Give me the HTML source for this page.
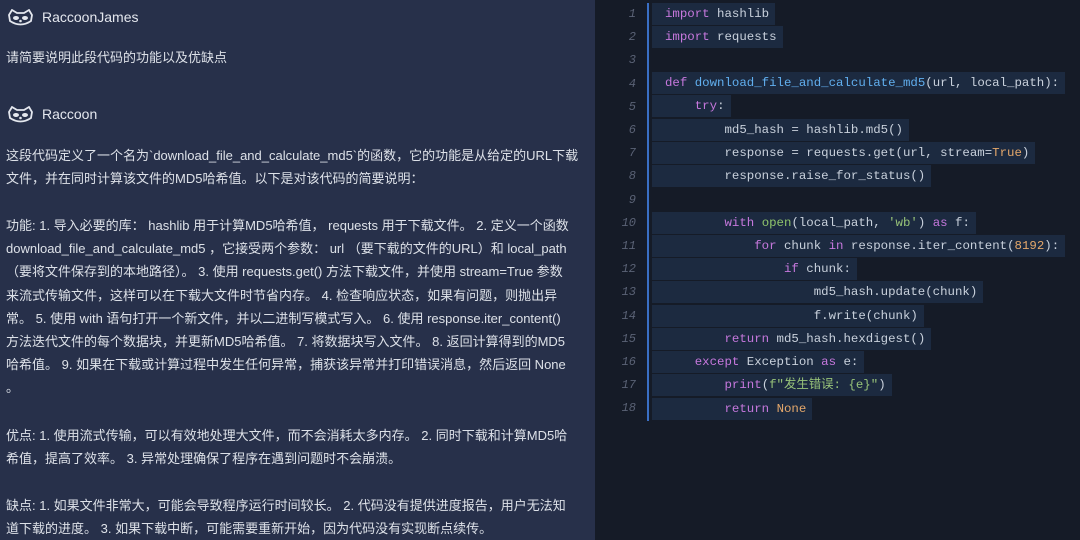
<!DOCTYPE html>
<html><head><meta charset="utf-8"><style>
*{margin:0;padding:0;box-sizing:border-box}
body{width:1080px;height:540px;overflow:hidden;background:#151b27;position:relative;font-family:"Liberation Sans","Noto Sans CJK SC",sans-serif}
#left{position:absolute;left:0;top:0;width:595px;height:540px;background:#27304a;color:#dde1e8}
.l{position:absolute;left:6px;font-size:13px;white-space:nowrap;line-height:16px;letter-spacing:0}
.name{position:absolute;left:42px;font-size:14px;color:#e4e7ee}
.ic{position:absolute;left:7px;width:27px;height:17px}
#code{position:absolute;left:595px;top:0;width:485px;height:540px;background:#151b27}
.bar{position:absolute;left:647px;top:3px;width:2px;height:418px;background:#3a6fc4}
.n{position:absolute;width:40px;left:596px;text-align:right;font-family:"Liberation Mono",monospace;font-style:italic;font-size:12px;color:#5a6275;line-height:16px}
.c{position:absolute;left:652px;font-family:"Liberation Mono",monospace;font-size:12.4px;color:#c9d1dc;white-space:pre;line-height:22px;height:22px}
.c span.h{background:#1c2a40;padding:0 6px 0 13px;display:inline-block;height:22px}
.k{color:#c678dd}.f{color:#61afef}.s{color:#98c379}.o{color:#e5a86b}.b{color:#8fc46b}
</style></head><body>
<div id="left">
<svg class="ic" style="top:9px" viewBox="0 0 27 17"><path d="M2 6 L5 1 L10 4 H17 L22 1 L25 6 L24 12 Q13.5 19 3 12 Z" fill="none" stroke="#e4e7ee" stroke-width="1.8"/><ellipse cx="9" cy="9" rx="3" ry="2" fill="#e4e7ee"/><ellipse cx="18" cy="9" rx="3" ry="2" fill="#e4e7ee"/><circle cx="13.5" cy="12" r="1.3" fill="#e4e7ee"/></svg>
<div class="name" style="top:9px">RaccoonJames</div>
<div class="l" style="top:50px">请简要说明此段代码的功能以及优缺点</div>
<svg class="ic" style="top:106px" viewBox="0 0 27 17"><path d="M2 6 L5 1 L10 4 H17 L22 1 L25 6 L24 12 Q13.5 19 3 12 Z" fill="none" stroke="#e4e7ee" stroke-width="1.8"/><ellipse cx="9" cy="9" rx="3" ry="2" fill="#e4e7ee"/><ellipse cx="18" cy="9" rx="3" ry="2" fill="#e4e7ee"/><circle cx="13.5" cy="12" r="1.3" fill="#e4e7ee"/></svg>
<div class="name" style="top:106px">Raccoon</div>
<div class="l" style="top:148px">这段代码定义了一个名为`download_file_and_calculate_md5`的函数，它的功能是从给定的URL下载</div>
<div class="l" style="top:171px">文件，并在同时计算该文件的MD5哈希值。以下是对该代码的简要说明：</div>
<div class="l" style="top:218px">功能: 1. 导入必要的库： hashlib 用于计算MD5哈希值， requests 用于下载文件。 2. 定义一个函数</div>
<div class="l" style="top:241px">download_file_and_calculate_md5 ，它接受两个参数： url （要下载的文件的URL）和 local_path</div>
<div class="l" style="top:264px">（要将文件保存到的本地路径）。 3. 使用 requests.get() 方法下载文件，并使用 stream=True 参数</div>
<div class="l" style="top:288px">来流式传输文件，这样可以在下载大文件时节省内存。 4. 检查响应状态，如果有问题，则抛出异</div>
<div class="l" style="top:311px">常。 5. 使用 with 语句打开一个新文件，并以二进制写模式写入。 6. 使用 response.iter_content()</div>
<div class="l" style="top:334px">方法迭代文件的每个数据块，并更新MD5哈希值。 7. 将数据块写入文件。 8. 返回计算得到的MD5</div>
<div class="l" style="top:357px">哈希值。 9. 如果在下载或计算过程中发生任何异常，捕获该异常并打印错误消息，然后返回 None</div>
<div class="l" style="top:380px">。</div>
<div class="l" style="top:428px">优点: 1. 使用流式传输，可以有效地处理大文件，而不会消耗太多内存。 2. 同时下载和计算MD5哈</div>
<div class="l" style="top:451px">希值，提高了效率。 3. 异常处理确保了程序在遇到问题时不会崩溃。</div>
<div class="l" style="top:498px">缺点: 1. 如果文件非常大，可能会导致程序运行时间较长。 2. 代码没有提供进度报告，用户无法知</div>
<div class="l" style="top:521px">道下载的进度。 3. 如果下载中断，可能需要重新开始，因为代码没有实现断点续传。</div>
</div>
<div id="code"></div>
<div class="bar"></div>
<div class="n" style="top:6px">1</div><div class="n" style="top:29px">2</div><div class="n" style="top:52px">3</div><div class="n" style="top:76px">4</div><div class="n" style="top:99px">5</div><div class="n" style="top:122px">6</div><div class="n" style="top:145px">7</div><div class="n" style="top:168px">8</div><div class="n" style="top:192px">9</div><div class="n" style="top:215px">10</div><div class="n" style="top:238px">11</div><div class="n" style="top:261px">12</div><div class="n" style="top:284px">13</div><div class="n" style="top:308px">14</div><div class="n" style="top:331px">15</div><div class="n" style="top:354px">16</div><div class="n" style="top:377px">17</div><div class="n" style="top:400px">18</div>
<div class="c" style="top:3px"><span class="h"><span class="k">import</span> hashlib</span></div>
<div class="c" style="top:26px"><span class="h"><span class="k">import</span> requests</span></div>
<div class="c" style="top:72px"><span class="h"><span class="k">def</span> <span class="f">download_file_and_calculate_md5</span>(url, local_path):</span></div>
<div class="c" style="top:95px"><span class="h">    <span class="k">try</span>:</span></div>
<div class="c" style="top:119px"><span class="h">        md5_hash = hashlib.md5()</span></div>
<div class="c" style="top:142px"><span class="h">        response = requests.get(url, stream=<span class="o">True</span>)</span></div>
<div class="c" style="top:165px"><span class="h">        response.raise_for_status()</span></div>
<div class="c" style="top:212px"><span class="h">        <span class="k">with</span> <span class="b">open</span>(local_path, <span class="s">'wb'</span>) <span class="k">as</span> f:</span></div>
<div class="c" style="top:235px"><span class="h">            <span class="k">for</span> chunk <span class="k">in</span> response.iter_content(<span class="o">8192</span>):</span></div>
<div class="c" style="top:258px"><span class="h">                <span class="k">if</span> chunk:</span></div>
<div class="c" style="top:281px"><span class="h">                    md5_hash.update(chunk)</span></div>
<div class="c" style="top:305px"><span class="h">                    f.write(chunk)</span></div>
<div class="c" style="top:328px"><span class="h">        <span class="k">return</span> md5_hash.hexdigest()</span></div>
<div class="c" style="top:351px"><span class="h">    <span class="k">except</span> Exception <span class="k">as</span> e:</span></div>
<div class="c" style="top:374px"><span class="h">        <span class="k">print</span>(<span class="s">f"发生错误: {e}"</span>)</span></div>
<div class="c" style="top:398px"><span class="h">        <span class="k">return</span> <span class="o">None</span></span></div>
</body></html>
